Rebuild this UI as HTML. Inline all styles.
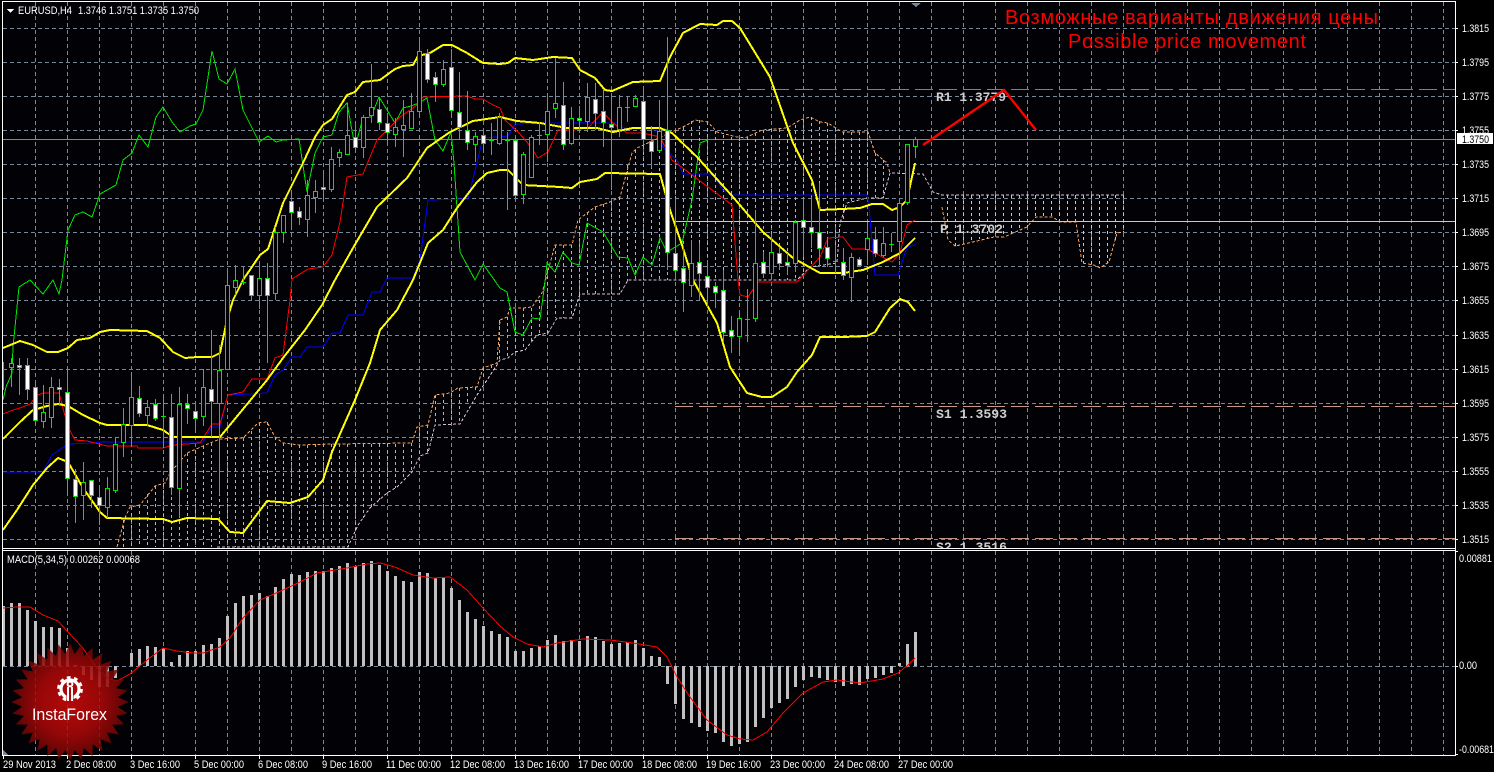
<!DOCTYPE html>
<html><head><meta charset="utf-8"><title>EURUSD,H4</title>
<style>
html,body{margin:0;padding:0;background:#000;width:1494px;height:772px;overflow:hidden}
svg{display:block}
text{font-family:"Liberation Sans",sans-serif;font-size:11px;fill:#fff}
.p{font-family:"Liberation Mono",monospace;font-weight:bold;font-size:13px;fill:#d0d0d0}
.r{font-size:20px;fill:#f00}
.c{shape-rendering:crispEdges}
</style></head><body>
<svg width="1494" height="772" viewBox="0 0 1494 772" xmlns="http://www.w3.org/2000/svg">
<defs>
<clipPath id="m"><rect x="3" y="2" width="1452" height="546"/></clipPath>
<radialGradient id="g" cx="50%" cy="50%" r="50%"><stop offset="0" stop-color="#d40a0a"/><stop offset=".55" stop-color="#b00808"/><stop offset="1" stop-color="#6a0505"/></radialGradient>
</defs>
<rect width="1494" height="772" fill="#000"/>
<rect x="3" y="2" width="1452" height="753" fill="#020206"/>
<g class="c" clip-path="url(#m)" fill="none">
<!-- grid -->
<path stroke="#778899" stroke-dasharray="4 3" d="M3 28.5H1455M3 62.5H1455M3 96.5H1455M3 130.5H1455M3 164.5H1455M3 198.5H1455M3 232.5H1455M3 266.5H1455M3 300.5H1455M3 335.5H1455M3 369.5H1455M3 403.5H1455M3 437.5H1455M3 471.5H1455M3 505.5H1455M3 539.5H1455"/>
<path stroke="#778899" stroke-dasharray="4 3" d="M35.5 2V548M67.5 2V548M99.5 2V548M131.5 2V548M163.5 2V548M195.5 2V548M227.5 2V548M259.5 2V548M291.5 2V548M323.5 2V548M355.5 2V548M387.5 2V548M419.5 2V548M451.5 2V548M483.5 2V548M515.5 2V548M547.5 2V548M579.5 2V548M611.5 2V548M643.5 2V548M675.5 2V548M707.5 2V548M739.5 2V548M771.5 2V548M803.5 2V548M835.5 2V548M867.5 2V548M899.5 2V548M931.5 2V548M963.5 2V548M995.5 2V548M1027.5 2V548M1059.5 2V548M1091.5 2V548M1123.5 2V548M1155.5 2V548M1187.5 2V548M1219.5 2V548M1251.5 2V548M1283.5 2V548M1315.5 2V548M1347.5 2V548M1379.5 2V548M1411.5 2V548M1443.5 2V548"/>
<!-- bid line -->
<path stroke="#778899" d="M3 139.5H1455"/>
<!-- cloud hatch -->
<path stroke="#f4a460" stroke-dasharray="3 3" d="M123.5 520V547M131.5 507V547M139.5 505V547M147.5 494V547M155.5 486V547M163.5 484V547M171.5 473V547M179.5 461V547M187.5 453V547M195.5 450V547M203.5 446V547M211.5 443V547M219.5 439V547M227.5 438V547M235.5 438V547M243.5 438V547M251.5 431V547M259.5 423V547M267.5 422V547M275.5 437V547M283.5 443V547M291.5 444V547M299.5 445V547M307.5 445V547M315.5 444V547M323.5 444V547M331.5 444V547M339.5 444V547M347.5 444V547M355.5 444V532M363.5 444V518M371.5 444V507M379.5 444V500M387.5 444V493M395.5 444V488M403.5 444V479M411.5 443V472M419.5 427V456M427.5 425V453M435.5 395V425M443.5 394V424M451.5 393V424M459.5 388V421M467.5 387V405M475.5 387V392M483.5 368V380M491.5 365V370M499.5 320V360M507.5 317V358M515.5 309V352M523.5 308V350M531.5 308V342M539.5 300V335M547.5 270V333M555.5 245V318M563.5 245V318M571.5 245V318M579.5 220V298M587.5 212V294M595.5 207V294M603.5 204V294M611.5 202V294M619.5 197V294M627.5 165V281M635.5 150V280M643.5 146V280M651.5 142V280M659.5 138V280M667.5 134V280M675.5 130V280M683.5 127V280M691.5 121V280M699.5 120V280M707.5 122V280M715.5 131V280M723.5 135V280M731.5 137V280M739.5 138V280M747.5 137V280M755.5 133V280M763.5 130V280M771.5 129V280M779.5 129V280M787.5 128V280M795.5 125V280M803.5 119V275M811.5 117V267M819.5 121V265M827.5 123V263M835.5 128V263M843.5 132V220M851.5 132V202M859.5 132V198M867.5 132V198M875.5 153V198M883.5 160V198"/>
<path stroke="#d8bfd8" stroke-dasharray="3 3" d="M947.5 195V238M955.5 195V246M963.5 195V244M971.5 195V241M979.5 195V239M987.5 195V238M995.5 195V237M1003.5 195V237M1011.5 195V234M1019.5 195V231M1027.5 195V227M1035.5 195V218M1043.5 195V217M1051.5 195V217M1059.5 195V221M1067.5 195V222M1075.5 195V222M1083.5 195V263M1091.5 195V265M1099.5 195V268M1107.5 195V263M1115.5 195V240M1123.5 195V232"/>
<!-- senkou A -->
<polyline stroke="#f4a460" stroke-dasharray="3 2" points="117,547 125,518 130,507 140,505 155,486 165,483 170,473 187,453 210,443 220,439 243,438 258,423 267,422 275,437 283,443 300,445 333,444 412,443 417,427 428,425 435,395 450,393 458,388 477,387 483,368 497,363 500,320 507,317 510,308 523,308 532,307 542,293 545,282 555,245 572,245 578,220 595,207 610,202 620,197 632,153 637,148 687,125 695,120 708,122 717,132 737,137 745,138 762,130 787,128 800,120 810,117 820,122 828,123 842,132 868,132 875,153 887,163 890,173"/>
<polyline stroke="#f4a460" stroke-dasharray="3 2" points="942,207 948,240 955,246 960,245 994,237 1004,237 1027,227 1036,217 1052,217 1061,222 1076,222 1082,263 1094,265 1100,268 1109,262 1117,233 1123,232"/>
<!-- senkou B -->
<polyline stroke="#d8bfd8" stroke-dasharray="3 2" points="217,547 348,547 358,525 370,508 387,493 397,487 412,472 420,456 428,453 435,425 460,424 477,395 497,365 500,360 508,358 515,352 525,350 537,335 548,333 557,318 572,318 578,300 580,294 620,294 628,280 677,280 797,280 810,267 837,263 840,223 847,203 867,198 883,198 890,173 923,174 933,192 942,195 994,195 1123,195"/>
<!-- pivot lines -->
<path stroke="#ffcc33" d="M675 221.5H1455"/>
<path stroke="#e0622a" stroke-dasharray="18 6" d="M675 89.5H1455"/>
<path stroke="#c89488" stroke-dasharray="18 6" d="M675 406.5H1455"/>
<path stroke="#c89488" stroke-dasharray="18 6" d="M675 538.5H1455"/>
<!-- chikou -->
<polyline stroke="#00e600" points="3,400 6,387 12,373 13,347 19,287 30,280 43,294 53,280 59,294 62,280 68,230 75,215 83,212 92,217 100,194 116,185 123,160 132,153 139,135 148,147 156,117 163,107 172,122 180,132 190,126 196,124 203,110 212,51 219,79 227,84 235,69 243,110 259,142 268,136 276,142 283,140 299,139 307,192 315,153 323,137 332,135 339,112 347,103 355,147 363,118 371,117 379,97 395,123 403,108 411,106 419,103 427,98 435,140 443,151 451,132 454,163 460,252 475,280 483,264 500,288 507,292 515,332 523,335 532,318 540,319 545,282 547,263 555,272 563,252 572,263 579,265 587,223 603,232 618,257 628,258 635,275 643,257 652,265 660,238 667,252 682,243 692,200 700,143 708,140"/>
<!-- kijun -->
<polyline stroke="#0000ff" points="3,472 43,472 52,455 68,444 95,443 100,442 203,442 212,427 220,427 228,395 267,393 275,375 283,370 292,357 300,357 307,347 323,347 332,333 340,333 348,315 363,315 372,292 380,292 387,278 413,278 420,260 428,200 468,199 483,138 508,136 515,124 550,123 617,123 623,128 657,130 663,147 677,160 683,174 713,174 723,190 733,195 867,195 869,207 875,275 898,275 907,247 915,245"/>
<!-- tenkan -->
<polyline stroke="#ff0000" points="3,414 13,410 20,408 30,404 38,395 43,393 59,393 68,427 75,440 87,441 107,446 137,446 138,448 163,448 173,445 200,443 212,424 220,424 228,395 243,392 252,379 267,379 275,358 283,355 290,300 292,279 308,269 323,267 332,255 340,222 347,177 363,174 377,140 400,117 417,105 423,97 467,96 475,99 483,99 493,105 500,108 505,120 518,132 527,142 538,158 548,152 558,130 573,130 588,128 603,112 613,123 627,133 643,133 660,137 672,160 732,205 738,280 740,295 748,297 758,282 797,282 820,257 828,238 843,237 852,249 867,249 892,262 900,253 907,225 915,220"/>
<!-- bollinger -->
<g stroke="#ffff00" stroke-width="2" stroke-linejoin="round">
<polyline points="3,348 20,341 33,345 47,352 58,352 68,348 77,340 90,338 100,332 110,330 147,331 160,338 173,352 185,358 197,357 212,357 220,353 227,320 233,300 243,280 260,255 268,249 283,203 292,185 303,163 315,137 323,125 332,119 347,95 355,92 363,82 380,80 395,69 403,66 413,65 418,56 430,53 443,45 452,45 467,53 483,63 500,64 508,63 515,58 533,60 553,57 572,58 580,70 595,78 605,90 612,91 633,82 660,81 670,57 683,33 700,24 717,25 723,21 732,21 740,28 770,77 793,143 812,180 820,210 843,209 860,208 872,204 883,204 892,210 900,207 907,200 915,163"/>
<polyline points="3,439 20,422 33,410 47,406 58,404 68,406 83,415 100,423 107,425 147,425 163,430 173,437 220,437 267,380 283,358 305,330 322,305 335,280 353,248 377,207 407,178 427,148 450,132 473,121 500,117 517,121 540,123 567,128 597,128 613,132 633,128 660,128 672,133 697,157 733,197 763,232 793,258 820,273 843,273 863,270 883,262 900,253 915,238"/>
<polyline points="3,530 17,510 33,485 47,468 58,458 68,462 83,488 100,512 107,518 163,519 172,522 187,518 218,519 230,532 243,533 267,501 290,503 308,497 323,480 332,452 355,400 370,363 380,330 397,310 413,280 428,243 443,230 457,208 477,182 487,173 500,170 508,170 523,185 560,187 572,188 580,182 597,179 605,173 660,174 670,210 682,245 693,280 717,323 730,367 747,393 762,397 772,397 787,387 797,372 812,355 820,337 843,337 867,336 875,332 890,308 900,299 908,302 915,311"/>
</g>
<!-- candle wicks -->
<path stroke="#00e600" d="M3.5 362V390M11.5 358V387M19.5 358V395M27.5 358V400M35.5 380V422M43.5 385V428M51.5 377V428M59.5 379V405M67.5 368V495M75.5 469V523M83.5 462V520M91.5 480V508M99.5 487V525M107.5 477V518M115.5 438V493M123.5 408V457M131.5 372V447M139.5 386V417M147.5 400V426M155.5 399V421M163.5 395V448M171.5 394V495M179.5 387V518M187.5 394V424M195.5 405V431M203.5 369V426M211.5 330V437M219.5 345V495M227.5 270V370M235.5 265V295M243.5 267V285M251.5 275V300M259.5 263V309M267.5 263V363M275.5 227V300M283.5 215V243M291.5 190V226M299.5 207V225M307.5 180V237M315.5 180V213M323.5 173V202M331.5 147V192M339.5 149V167M347.5 103V155M355.5 122V153M363.5 115V158M371.5 64V123M379.5 97V130M387.5 113V142M395.5 118V147M403.5 100V157M411.5 93V128M419.5 37V117M427.5 49V83M435.5 72V102M443.5 60V87M451.5 49V117M459.5 72V140M467.5 91V150M475.5 132V162M483.5 128V153M491.5 123V155M499.5 113V145M507.5 132V210M515.5 140V200M523.5 152V204M531.5 135V177M539.5 122V145M547.5 97V162M555.5 58V118M563.5 82V150M571.5 107V145M579.5 106V133M587.5 83V132M595.5 83V130M603.5 89V147M611.5 95V190M619.5 95V137M627.5 97V122M635.5 95V107M643.5 89V142M651.5 126V168M659.5 100V152M667.5 37V270M675.5 198V280M683.5 247V312M691.5 240V297M699.5 243V300M707.5 260V307M715.5 282V308M723.5 270V342M731.5 316V353M739.5 312V354M747.5 289V342M755.5 210V322M763.5 252V278M771.5 235V280M779.5 247V270M787.5 253V275M795.5 220V272M803.5 198V257M811.5 197V248M819.5 183V267M827.5 237V267M835.5 245V273M843.5 248V280M851.5 253V302M859.5 257V267M867.5 222V262M875.5 227V257M883.5 227V257M891.5 233V252M899.5 198V260M907.5 144V205M915.5 137V158"/>
<!-- doji -->
<path stroke="#00e600" d="M161 416.5h5M241 282.5h5M489 140.5h5M505 140.5h5M537 135.5h5M625 107.5h5M745 319.5h5M833 261.5h5M889 244.5h5"/>
<!-- bull bodies -->
<path stroke="#00e600" fill="#020206" d="M9.5 363.5h4v4h-4zM41.5 412.5h4v9h-4zM49.5 387.5h4v30h-4zM81.5 482.5h4v13h-4zM105.5 488.5h4v19h-4zM113.5 444.5h4v46h-4zM121.5 424.5h4v18h-4zM129.5 397.5h4v28h-4zM145.5 407.5h4v8h-4zM177.5 404.5h4v84h-4zM201.5 387.5h4v29h-4zM217.5 370.5h4v33h-4zM225.5 285.5h4v84h-4zM233.5 280.5h4v7h-4zM257.5 278.5h4v17h-4zM273.5 232.5h4v61h-4zM281.5 215.5h4v17h-4zM305.5 195.5h4v24h-4zM313.5 191.5h4v6h-4zM329.5 159.5h4v30h-4zM337.5 152.5h4v5h-4zM345.5 135.5h4v19h-4zM361.5 117.5h4v30h-4zM369.5 107.5h4v8h-4zM393.5 127.5h4v7h-4zM401.5 125.5h4v4h-4zM409.5 111.5h4v17h-4zM417.5 51.5h4v60h-4zM441.5 69.5h4v15h-4zM473.5 136.5h4v8h-4zM497.5 117.5h4v26h-4zM521.5 154.5h4v40h-4zM529.5 137.5h4v40h-4zM545.5 111.5h4v23h-4zM553.5 103.5h4v5h-4zM569.5 118.5h4v25h-4zM585.5 97.5h4v24h-4zM617.5 107.5h4v22h-4zM633.5 98.5h4v8h-4zM657.5 131.5h4v19h-4zM689.5 263.5h4v22h-4zM737.5 318.5h4v18h-4zM753.5 263.5h4v55h-4zM769.5 252.5h4v21h-4zM793.5 222.5h4v41h-4zM849.5 257.5h4v20h-4zM865.5 238.5h4v11h-4zM881.5 243.5h4v12h-4zM897.5 203.5h4v38h-4zM905.5 144.5h4v58h-4zM913.5 139.5h4v7h-4z"/>
<!-- bear bodies -->
<path stroke="#00e600" fill="#fff" d="M17.5 365.5h4v2h-4zM25.5 365.5h4v24h-4zM33.5 387.5h4v33h-4zM57.5 387.5h4v2h-4zM65.5 392.5h4v86h-4zM73.5 479.5h4v17h-4zM89.5 480.5h4v15h-4zM97.5 497.5h4v8h-4zM137.5 398.5h4v15h-4zM153.5 404.5h4v14h-4zM169.5 417.5h4v70h-4zM185.5 404.5h4v4h-4zM193.5 411.5h4v7h-4zM209.5 389.5h4v12h-4zM249.5 275.5h4v20h-4zM265.5 278.5h4v17h-4zM289.5 201.5h4v11h-4zM297.5 211.5h4v6h-4zM321.5 187.5h4v2h-4zM353.5 137.5h4v10h-4zM377.5 109.5h4v13h-4zM385.5 123.5h4v9h-4zM425.5 53.5h4v26h-4zM433.5 77.5h4v7h-4zM449.5 67.5h4v43h-4zM457.5 112.5h4v15h-4zM465.5 130.5h4v12h-4zM481.5 135.5h4v8h-4zM513.5 140.5h4v55h-4zM561.5 105.5h4v39h-4zM577.5 118.5h4v2h-4zM593.5 99.5h4v14h-4zM601.5 111.5h4v11h-4zM609.5 124.5h4v3h-4zM641.5 101.5h4v38h-4zM649.5 141.5h4v10h-4zM665.5 130.5h4v122h-4zM673.5 253.5h4v17h-4zM681.5 268.5h4v14h-4zM697.5 262.5h4v11h-4zM705.5 276.5h4v11h-4zM713.5 286.5h4v6h-4zM721.5 290.5h4v42h-4zM729.5 330.5h4v6h-4zM761.5 262.5h4v11h-4zM777.5 253.5h4v10h-4zM785.5 262.5h4v3h-4zM801.5 220.5h4v7h-4zM809.5 227.5h4v5h-4zM817.5 232.5h4v16h-4zM825.5 247.5h4v11h-4zM841.5 262.5h4v13h-4zM857.5 259.5h4v6h-4zM873.5 239.5h4v14h-4z"/>
<!-- pivot labels -->
<text class="p" x="936" y="101" textLength="70" lengthAdjust="spacingAndGlyphs">R1 1.3779</text>
<text class="p" x="940" y="233" textLength="63" lengthAdjust="spacingAndGlyphs">P 1.3702</text>
<text class="p" x="936" y="418" textLength="71" lengthAdjust="spacingAndGlyphs">S1 1.3593</text>
<text class="p" x="936" y="551" textLength="71" lengthAdjust="spacingAndGlyphs">S2 1.3516</text>
<!-- arrow -->
<polyline stroke="#ff0000" stroke-width="2.4" points="923,145 1004,90 1036,130" style="shape-rendering:auto"/>
</g>
<!-- MACD pane -->
<g class="c" fill="none">
<path stroke="#778899" stroke-dasharray="4 3" d="M3 666.5H1455"/>
<path stroke="#778899" stroke-dasharray="4 3" d="M35.5 551V755M67.5 551V755M99.5 551V755M131.5 551V755M163.5 551V755M195.5 551V755M227.5 551V755M259.5 551V755M291.5 551V755M323.5 551V755M355.5 551V755M387.5 551V755M419.5 551V755M451.5 551V755M483.5 551V755M515.5 551V755M547.5 551V755M579.5 551V755M611.5 551V755M643.5 551V755M675.5 551V755M707.5 551V755M739.5 551V755M771.5 551V755M803.5 551V755M835.5 551V755M867.5 551V755M899.5 551V755M931.5 551V755M963.5 551V755M995.5 551V755M1027.5 551V755M1059.5 551V755M1091.5 551V755M1123.5 551V755M1155.5 551V755M1187.5 551V755M1219.5 551V755M1251.5 551V755M1283.5 551V755M1315.5 551V755M1347.5 551V755M1379.5 551V755M1411.5 551V755M1443.5 551V755"/>
<path stroke="#c0c0c0" stroke-width="3" d="M3.5 666V606M11.5 666V603M19.5 666V603M27.5 666V610M35.5 666V621M43.5 666V627M51.5 666V627M59.5 666V628M67.5 666V648M75.5 666V665M83.5 666V675M91.5 666V680M99.5 666V687M107.5 666V687M115.5 666V678M131.5 666V653M139.5 666V649M147.5 666V646M155.5 666V647M163.5 666V648M171.5 666V662M179.5 666V655M187.5 666V651M195.5 666V651M203.5 666V645M211.5 666V644M219.5 666V638M227.5 666V616M235.5 666V603M243.5 666V596M251.5 666V595M259.5 666V593M267.5 666V596M275.5 666V587M283.5 666V579M291.5 666V574M299.5 666V575M307.5 666V572M315.5 666V571M323.5 666V571M331.5 666V568M339.5 666V566M347.5 666V563M355.5 666V566M363.5 666V563M371.5 666V561M379.5 666V565M387.5 666V571M395.5 666V576M403.5 666V581M411.5 666V582M419.5 666V572M427.5 666V573M435.5 666V578M443.5 666V578M451.5 666V588M459.5 666V600M467.5 666V612M475.5 666V619M483.5 666V626M491.5 666V631M499.5 666V634M507.5 666V637M515.5 666V651M523.5 666V651M531.5 666V648M539.5 666V646M547.5 666V640M555.5 666V635M563.5 666V641M571.5 666V640M579.5 666V641M587.5 666V636M595.5 666V637M603.5 666V641M611.5 666V644M619.5 666V643M627.5 666V642M635.5 666V640M643.5 666V648M651.5 666V656M659.5 666V657M667.5 666V684M675.5 666V704M683.5 666V719M691.5 666V723M699.5 666V727M707.5 666V731M715.5 666V733M723.5 666V742M731.5 666V746M739.5 666V744M747.5 666V742M755.5 666V727M763.5 666V718M771.5 666V708M779.5 666V703M787.5 666V699M795.5 666V687M803.5 666V680M811.5 666V677M819.5 666V678M827.5 666V680M835.5 666V682M843.5 666V686M851.5 666V684M859.5 666V685M867.5 666V679M875.5 666V678M883.5 666V675M891.5 666V673M899.5 666V663M907.5 666V644M915.5 666V632"/>
<polyline stroke="#ff0000" points="3,608 18,607 30,607 43,615 58,621 68,632 82,647 97,668 107,678 117,681 130,674 147,660 163,648 177,651 193,653 203,653 220,647 230,638 243,618 260,600 283,590 300,582 317,573 347,568 367,564 380,563 395,567 413,575 433,578 450,577 467,590 483,608 500,626 513,637 527,644 543,647 557,643 583,639 610,640 633,643 657,647 667,657 677,677 690,697 707,720 727,735 740,739 753,740 767,732 783,713 803,693 823,682 837,680 860,683 883,679 898,673 908,665 915,658"/>
<!-- small markers -->
<path fill="#778899" stroke="none" d="M3 750l5 5h-5z"/>
</g>
<!-- frames -->
<g class="c" fill="none" stroke="#fff">
<path d="M2.5 1.5H1455.5V755.5H2.5ZM2.5 548.5H1455.5M2.5 550.5H1455.5"/>
<path d="M1456 28.5h2M1456 62.5h2M1456 96.5h2M1456 130.5h2M1456 164.5h2M1456 198.5h2M1456 232.5h2M1456 266.5h2M1456 300.5h2M1456 335.5h2M1456 369.5h2M1456 403.5h2M1456 437.5h2M1456 471.5h2M1456 505.5h2M1456 539.5h2M1456 551.5h2M1456 666.5h2M1456 754.5h2"/>
<path d="M3.5 756v3M67.5 756v3M131.5 756v3M195.5 756v3M259.5 756v3M323.5 756v3M387.5 756v3M451.5 756v3M515.5 756v3M579.5 756v3M643.5 756v3M707.5 756v3M771.5 756v3M835.5 756v3M899.5 756v3"/>
</g>
<path class="c" fill="#778899" d="M911 3h10l-5 4z"/>
<path class="c" fill="#fff" d="M7 9h7l-3.500 4z"/>
<!-- logo -->
<polygon fill="url(#g)" fill-opacity=".85" transform="translate(70 702) scale(.98)" points="60,0 48.8,4.8 58.8,11.7 46.9,14.2 55.400,23 43.2,23.1 49.9,33.3 37.9,31.1 42.4,42.4 31.1,37.9 33.3,49.9 23.1,43.2 23,55.4 14.2,46.9 11.7,58.8 4.8,48.8 0,60 -4.8,48.8 -11.7,58.8 -14.2,46.9 -23,55.4 -23.1,43.2 -33.3,49.9 -31.1,37.9 -42.4,42.4 -37.9,31.1 -49.9,33.3 -43.2,23.1 -55.4,23 -46.9,14.2 -58.8,11.7 -48.8,4.8 -60,0 -48.8,-4.8 -58.8,-11.7 -46.9,-14.2 -55.4,-23 -43.2,-23.1 -49.9,-33.3 -37.9,-31.1 -42.4,-42.4 -31.1,-37.9 -33.3,-49.9 -23.1,-43.2 -23,-55.4 -14.2,-46.9 -11.7,-58.8 -4.8,-48.8 0,-60 4.8,-48.8 11.7,-58.8 14.2,-46.9 23,-55.4 23.1,-43.2 33.3,-49.9 31.1,-37.9 42.4,-42.4 37.9,-31.1 49.9,-33.3 43.2,-23.1 55.4,-23 46.9,-14.2 58.8,-11.7 48.8,-4.8"/>
<g fill="none" stroke="#fff">
<circle cx="70" cy="689" r="11.200" stroke-width="3.400" stroke-dasharray="3.700 3.340"/>
<circle cx="70" cy="689" r="9" stroke-width="3.200"/>
<path stroke="#b00808" stroke-width="7" d="M70 695V703"/>
<circle cx="70" cy="684" r="2.400" stroke-width="2"/>
<path stroke-width="2" d="M68 687V701M72 687V701"/>
</g>
<text x="32" y="720" style="font-size:17px" textLength="75" lengthAdjust="spacingAndGlyphs">InstaForex</text>
<!-- chart title -->
<text x="18" y="14" textLength="54" lengthAdjust="spacingAndGlyphs">EURUSD,H4</text>
<text x="78" y="14" textLength="121" lengthAdjust="spacingAndGlyphs">1.3746 1.3751 1.3735 1.3750</text>
<text x="7" y="563" textLength="133" lengthAdjust="spacingAndGlyphs">MACD(5,34,5) 0.00262 0.00068</text>
<!-- annotation -->
<text class="r" x="1005" y="24" textLength="373" lengthAdjust="spacing">Возможные варианты движения цены</text>
<text class="r" x="1068" y="48" textLength="238" lengthAdjust="spacing">Possible price movement</text>
<!-- price axis -->
<g>
<text x="1462" y="32" textLength="27" lengthAdjust="spacingAndGlyphs">1.3815</text><text x="1462" y="66" textLength="27" lengthAdjust="spacingAndGlyphs">1.3795</text><text x="1462" y="100" textLength="27" lengthAdjust="spacingAndGlyphs">1.3775</text><text x="1462" y="134" textLength="27" lengthAdjust="spacingAndGlyphs">1.3755</text><text x="1462" y="168" textLength="27" lengthAdjust="spacingAndGlyphs">1.3735</text><text x="1462" y="202" textLength="27" lengthAdjust="spacingAndGlyphs">1.3715</text><text x="1462" y="236" textLength="27" lengthAdjust="spacingAndGlyphs">1.3695</text><text x="1462" y="270" textLength="27" lengthAdjust="spacingAndGlyphs">1.3675</text><text x="1462" y="304" textLength="27" lengthAdjust="spacingAndGlyphs">1.3655</text><text x="1462" y="339" textLength="27" lengthAdjust="spacingAndGlyphs">1.3635</text><text x="1462" y="373" textLength="27" lengthAdjust="spacingAndGlyphs">1.3615</text><text x="1462" y="407" textLength="27" lengthAdjust="spacingAndGlyphs">1.3595</text><text x="1462" y="441" textLength="27" lengthAdjust="spacingAndGlyphs">1.3575</text><text x="1462" y="475" textLength="27" lengthAdjust="spacingAndGlyphs">1.3555</text><text x="1462" y="509" textLength="27" lengthAdjust="spacingAndGlyphs">1.3535</text><text x="1462" y="543" textLength="27" lengthAdjust="spacingAndGlyphs">1.3515</text>
<rect x="1457" y="133" width="36" height="11" fill="#fff"/>
<text x="1462" y="143" textLength="27" lengthAdjust="spacingAndGlyphs" style="fill:#000">1.3750</text>
<text x="1459" y="562" textLength="33" lengthAdjust="spacingAndGlyphs">0.00881</text>
<text x="1459" y="669" textLength="18" lengthAdjust="spacingAndGlyphs">0.00</text>
<text x="1459" y="753" textLength="35" lengthAdjust="spacingAndGlyphs">-0.00681</text>
</g>
<!-- time axis -->
<g>
<text x="3" y="768" textLength="53" lengthAdjust="spacingAndGlyphs">29 Nov 2013</text>
<text x="66" y="768" textLength="50" lengthAdjust="spacingAndGlyphs">2 Dec 08:00</text>
<text x="130" y="768" textLength="50" lengthAdjust="spacingAndGlyphs">3 Dec 16:00</text>
<text x="194" y="768" textLength="50" lengthAdjust="spacingAndGlyphs">5 Dec 00:00</text>
<text x="258" y="768" textLength="50" lengthAdjust="spacingAndGlyphs">6 Dec 08:00</text>
<text x="322" y="768" textLength="50" lengthAdjust="spacingAndGlyphs">9 Dec 16:00</text>
<text x="386" y="768" textLength="55" lengthAdjust="spacingAndGlyphs">11 Dec 00:00</text>
<text x="450" y="768" textLength="55" lengthAdjust="spacingAndGlyphs">12 Dec 08:00</text>
<text x="514" y="768" textLength="55" lengthAdjust="spacingAndGlyphs">13 Dec 16:00</text>
<text x="578" y="768" textLength="55" lengthAdjust="spacingAndGlyphs">17 Dec 00:00</text>
<text x="642" y="768" textLength="55" lengthAdjust="spacingAndGlyphs">18 Dec 08:00</text>
<text x="706" y="768" textLength="55" lengthAdjust="spacingAndGlyphs">19 Dec 16:00</text>
<text x="770" y="768" textLength="55" lengthAdjust="spacingAndGlyphs">23 Dec 00:00</text>
<text x="834" y="768" textLength="55" lengthAdjust="spacingAndGlyphs">24 Dec 08:00</text>
<text x="898" y="768" textLength="55" lengthAdjust="spacingAndGlyphs">27 Dec 00:00</text>
</g>
</svg>
</body></html>
